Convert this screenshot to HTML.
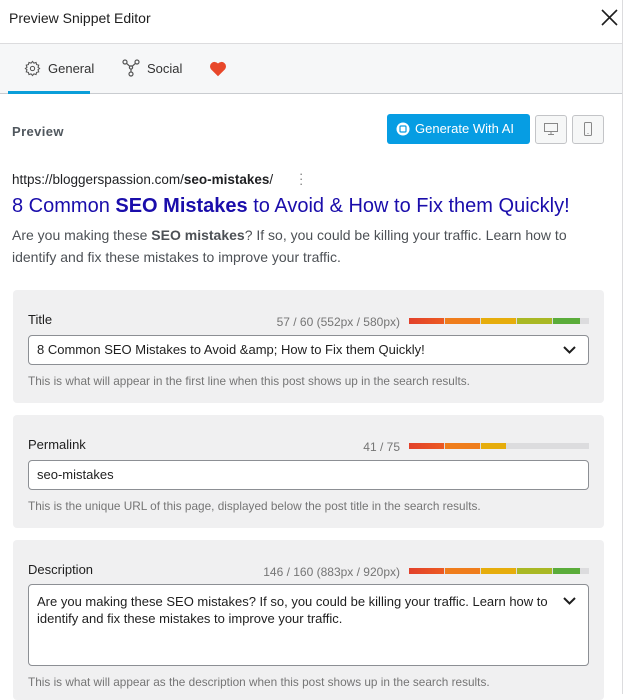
<!DOCTYPE html>
<html><head><style>
*{box-sizing:border-box;margin:0;padding:0}
body{width:626px;height:694px;overflow:hidden;background:#fff;font-family:"Liberation Sans",Arial,sans-serif;color:#1e1e1e;position:relative}
.a{position:absolute}
.hdr{left:0;top:0;width:622px;height:44px;border-bottom:1px solid #dcdcde}
.tabs{left:0;top:44px;width:622px;height:50px;background:#f6f7f8;border-bottom:1px solid #c9ccd0}
.rb{left:622px;top:0;width:1px;height:694px;background:#dcdcde}
.panel{left:13px;width:591px;background:#f0f0f1;border-radius:4px}
.lbl{font-size:13px;color:#1e1e1e}
.cnt{font-size:12px;color:#757575;text-align:right}
.bar{height:6px;width:180px;background:#dcdcde;display:flex}
.bar i{display:block;height:6px;width:35px;margin-right:1px}
.inp{background:#fff;border:1px solid #8c8f94;border-radius:4px;font-size:13px;color:#1e1e1e;padding:0 8px}
.help{font-size:11.8px;color:#757575;white-space:nowrap}
.chev{position:absolute;right:12px;top:10px}
</style></head><body>
<div class="a hdr"></div>
<div class="a rb"></div>
<div class="a" style="left:9px;top:10px;font-size:14px">Preview Snippet Editor</div>
<svg class="a" style="left:601px;top:9px" width="17" height="17" viewBox="0 0 17 17"><path d="M1 1L16 16M16 1L1 16" stroke="#1e1e1e" stroke-width="1.6"/></svg>
<div class="a tabs"></div>
<div class="a" style="left:8px;top:91px;width:82px;height:3px;background:#0a9ed9"></div>
<svg class="a" style="left:24px;top:60px" width="17" height="17" viewBox="0 0 24 24" fill="none" stroke="#555" stroke-width="1.5"><circle cx="12" cy="12" r="3"/><path d="M12 2l2 2.5 3-1 .8 3 3 .8-1 3L22 12l-2.2 1.7 1 3-3 .8-.8 3-3-1L12 22l-2-2.5-3 1-.8-3-3-.8 1-3L2 12l2.2-1.7-1-3 3-.8.8-3 3 1z"/></svg>
<div class="a" style="left:48px;top:61px;font-size:13px;color:#333">General</div>
<svg class="a" style="left:122px;top:59px" width="18" height="18" viewBox="0 0 18 18" fill="none" stroke="#555" stroke-width="1.2"><circle cx="3" cy="3" r="2"/><circle cx="15" cy="3" r="2"/><circle cx="9" cy="15" r="2"/><circle cx="9" cy="8.5" r="1.6"/><path d="M4.5 4.3L8 7.5M13.5 4.3L10 7.5M9 10v3"/></svg>
<div class="a" style="left:147px;top:61px;font-size:13px;color:#333">Social</div>
<svg class="a" style="left:209px;top:61px" width="18" height="16" viewBox="0 0 24 22"><path d="M12 21L2.5 11.5A5.5 5.5 0 0 1 12 3.5a5.5 5.5 0 0 1 9.5 8z" fill="#e8472a"/></svg>
<div class="a" style="left:12px;top:124px;font-size:13px;color:#50575e;font-weight:bold;letter-spacing:.4px">Preview</div>
<div class="a" style="left:387px;top:114px;width:143px;height:30px;background:#069de3;border-radius:3px;color:#fff;font-size:13px;line-height:30px;padding-left:28px">Generate With AI</div>
<svg class="a" style="left:396px;top:122px" width="14" height="14" viewBox="0 0 14 14"><circle cx="7" cy="7" r="6.5" fill="#fff"/><rect x="4" y="4" width="6" height="6" rx="1" fill="none" stroke="#069de3" stroke-width="1.2"/></svg>
<div class="a" style="left:535px;top:115px;width:32px;height:29px;border:1px solid #c3c4c7;border-radius:3px;background:#f6f7f7"></div>
<svg class="a" style="left:543px;top:122px" width="16" height="14" viewBox="0 0 16 14" fill="none" stroke="#888" stroke-width="1"><rect x="1.5" y="1.5" width="13" height="8"/><path d="M8 10v2M5 12.5h6"/></svg>
<div class="a" style="left:572px;top:115px;width:32px;height:29px;border:1px solid #c3c4c7;border-radius:3px;background:#f6f7f7"></div>
<svg class="a" style="left:583px;top:121px" width="10" height="16" viewBox="0 0 10 16" fill="none" stroke="#888" stroke-width="1"><rect x="1.5" y="1.5" width="7" height="13" rx="1"/><path d="M4.5 12.5h1"/></svg>
<div class="a" style="left:12px;top:172px;font-size:13.5px;color:#202124">https://bloggerspassion.com/<b>seo-mistakes</b>/</div>
<div class="a" style="left:299px;top:171px;font-size:13px;color:#777;line-height:5px">·<br>·<br>·</div>
<div class="a" style="left:12px;top:195px;font-size:20px;color:#1a0dab;white-space:nowrap">8 Common <b>SEO Mistakes</b> to Avoid &amp; How to Fix them Quickly!</div>
<div class="a" style="left:12px;top:224px;width:600px;font-size:14px;line-height:22px;color:#4d5156">Are you making these <b>SEO mistakes</b>? If so, you could be killing your traffic. Learn how to<br>identify and fix these mistakes to improve your traffic.</div>

<div class="a panel" style="top:290px;height:113px"></div>
<div class="a lbl" style="left:28px;top:312px">Title</div>
<div class="a cnt" style="left:200px;top:315px;width:200px">57 / 60 (552px / 580px)</div>
<div class="a bar" style="left:409px;top:318px"><i style="background:linear-gradient(90deg,#e2412b,#ec5a22)"></i><i style="background:#ef7d1c"></i><i style="background:#e6ad0c"></i><i style="background:#a9b824"></i><i style="background:#5aac3a;width:27px"></i></div>
<div class="a inp" style="left:28px;top:335px;width:561px;height:30px;line-height:28px">8 Common SEO Mistakes to Avoid &amp;amp; How to Fix them Quickly!<svg class="chev" width="13" height="8" viewBox="0 0 13 8"><path d="M1 1l5.5 5.5L12 1" fill="none" stroke="#1e1e1e" stroke-width="2"/></svg></div>
<div class="a help" style="left:28px;top:374px">This is what will appear in the first line when this post shows up in the search results.</div>

<div class="a panel" style="top:415px;height:113px"></div>
<div class="a lbl" style="left:28px;top:437px">Permalink</div>
<div class="a cnt" style="left:200px;top:440px;width:200px">41 / 75</div>
<div class="a bar" style="left:409px;top:443px"><i style="background:linear-gradient(90deg,#e2412b,#ec5a22)"></i><i style="background:#ef7d1c"></i><i style="background:#e6ad0c;width:25px"></i></div>
<div class="a inp" style="left:28px;top:460px;width:561px;height:30px;line-height:28px">seo-mistakes</div>
<div class="a help" style="left:28px;top:499px">This is the unique URL of this page, displayed below the post title in the search results.</div>

<div class="a panel" style="top:540px;height:160px"></div>
<div class="a lbl" style="left:28px;top:562px">Description</div>
<div class="a cnt" style="left:200px;top:565px;width:200px">146 / 160 (883px / 920px)</div>
<div class="a bar" style="left:409px;top:568px"><i style="background:linear-gradient(90deg,#e2412b,#ec5a22)"></i><i style="background:#ef7d1c"></i><i style="background:#e6ad0c"></i><i style="background:#a9b824"></i><i style="background:#5aac3a;width:27px"></i></div>
<div class="a inp" style="left:28px;top:584px;width:561px;height:82px;padding-top:8px;padding-right:40px;line-height:17px">Are you making these SEO mistakes? If so, you could be killing your traffic. Learn how to identify and fix these mistakes to improve your traffic.<svg class="chev" style="top:12px" width="13" height="8" viewBox="0 0 13 8"><path d="M1 1l5.5 5.5L12 1" fill="none" stroke="#1e1e1e" stroke-width="2"/></svg></div>
<div class="a help" style="left:28px;top:675px">This is what will appear as the description when this post shows up in the search results.</div>
</body></html>
